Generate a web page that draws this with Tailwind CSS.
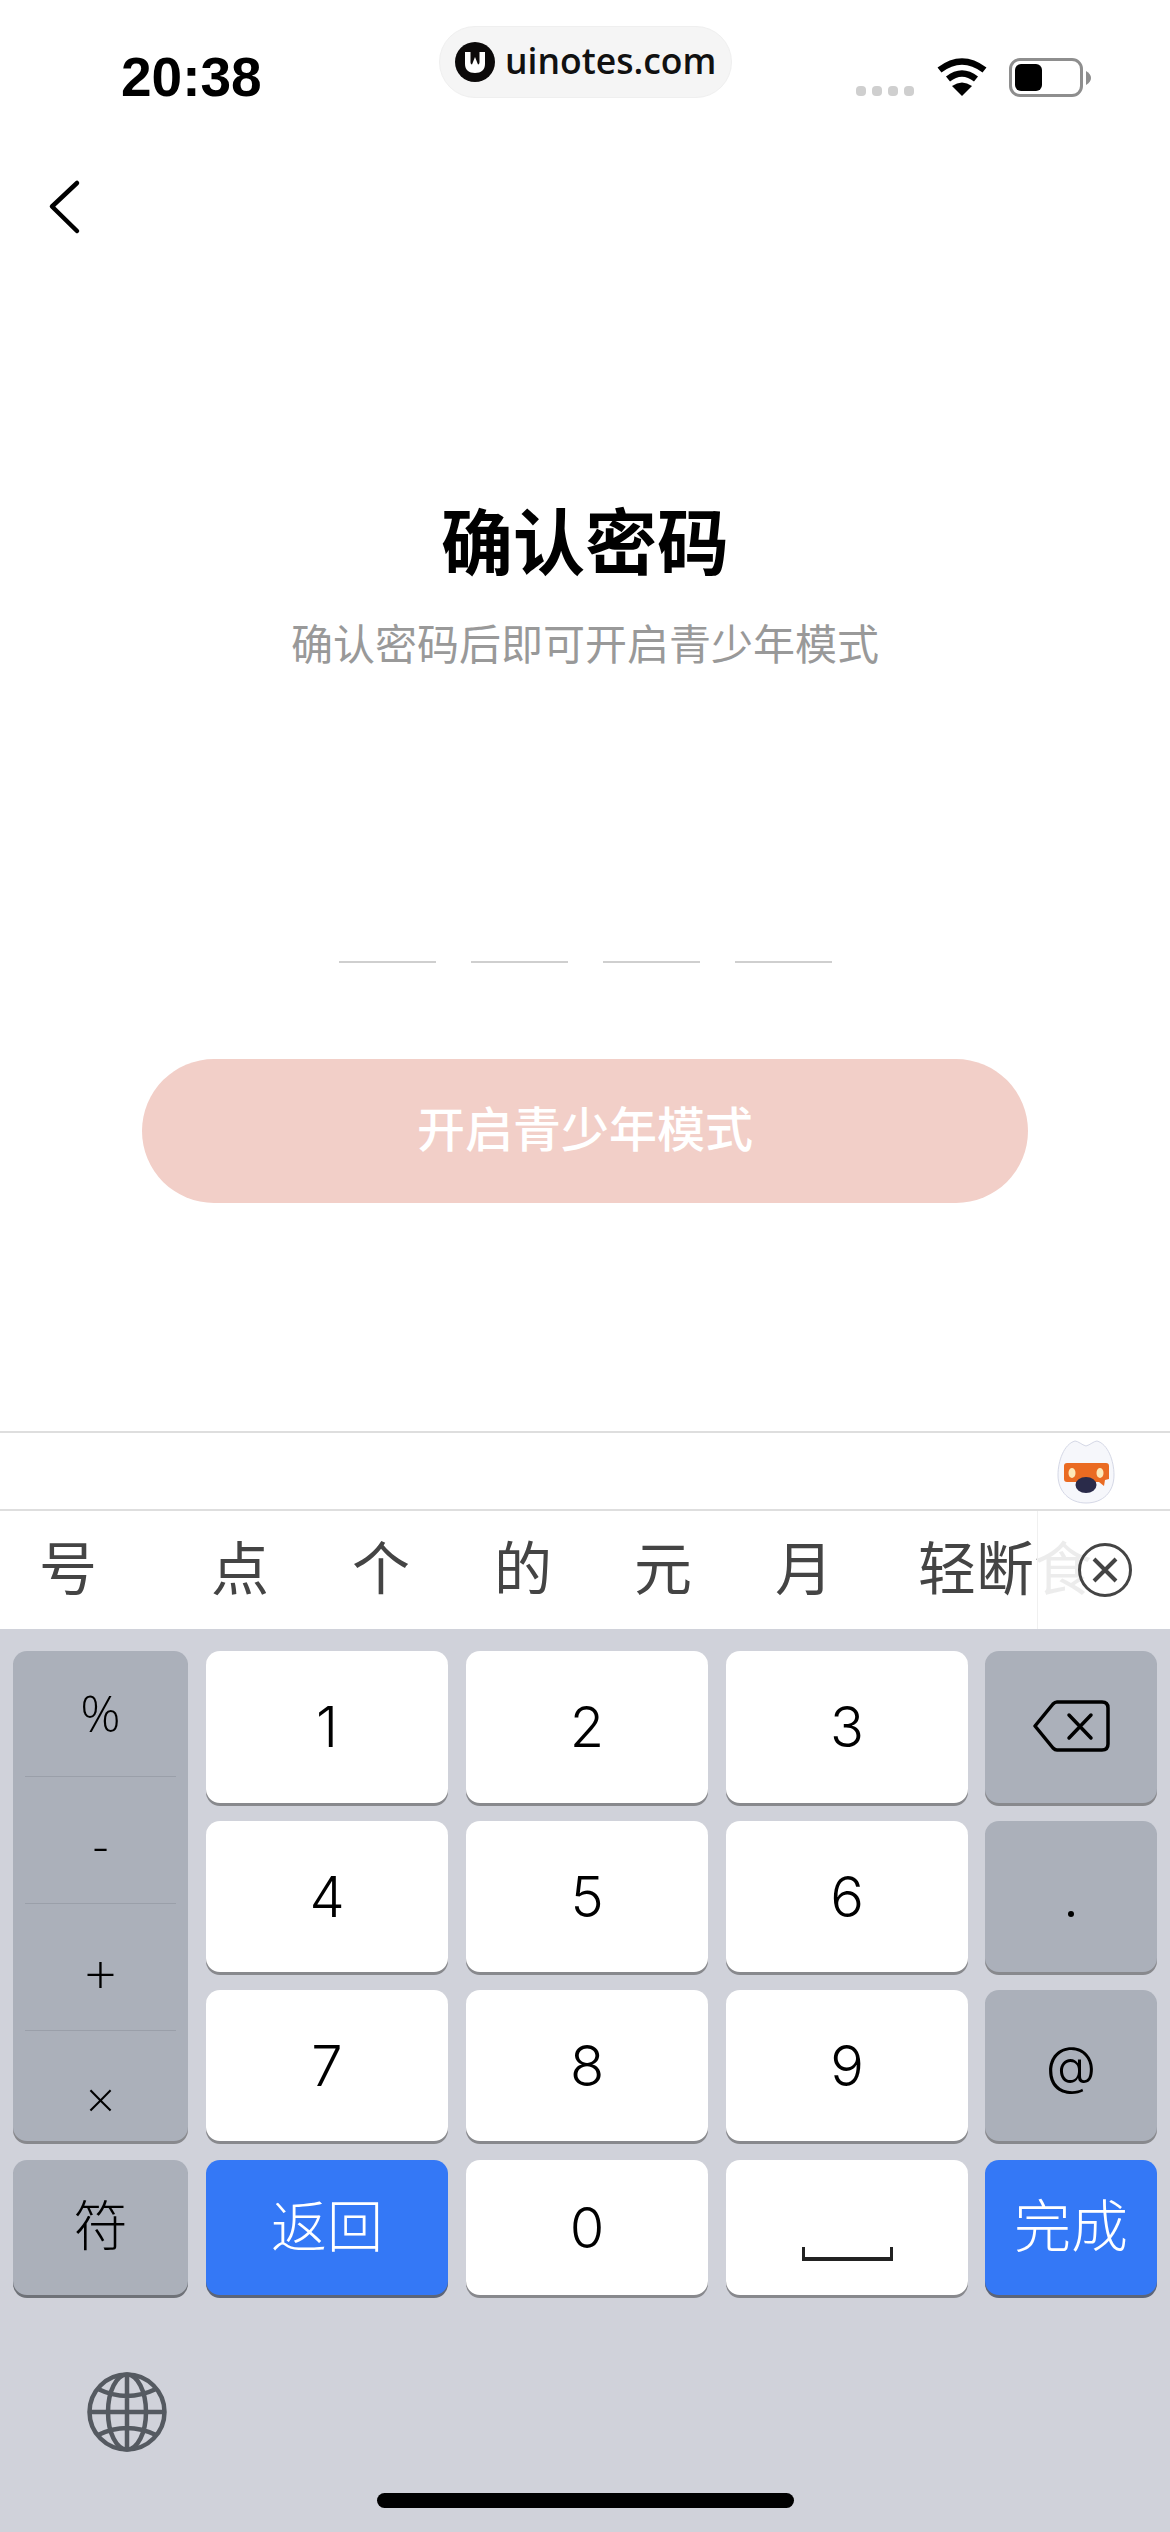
<!DOCTYPE html>
<html lang="zh-CN">
<head>
  <meta charset="UTF-8" />
  <meta name="viewport" content="width=device-width, initial-scale=1.0"/>
  <title>确认密码</title>
  <script src="https://cdn.jsdelivr.net/npm/@tailwindcss/browser@4"></script>
</head>
<body class="bg-white font-['Liberation_Sans','Noto_Sans_CJK_SC',sans-serif]">
<div class="relative w-[1170px] h-[2532px] overflow-hidden bg-white flex flex-col">

  <!-- status bar -->
  <div class="h-[160px] shrink-0 relative">
    <div class="absolute left-[121px] top-[46px] text-[55px] leading-[62px] font-bold text-black">20:38</div>
    <!-- watermark -->
    <div class="absolute left-[439px] top-[26px] w-[293px] h-[72px] rounded-[36px] bg-[#f5f5f5] border border-[#efefef] flex items-center pl-[15px] gap-[10px]">
      <svg width="40" height="40" viewBox="0 0 40 40"><circle cx="20" cy="20" r="20" fill="#0c0a0a"/><path d="M10 10h5.500v10c0 1.500.5 2.500 1.500 2.500L20 15l3 7.500c1 0 1.500-1 1.500-2.500V10H30v12c0 6-4 9-10 9s-10-3-10-9z" fill="#fff"/></svg>
      <span class="text-[35.500px] leading-none font-semibold text-[#111] -mt-[3px] font-['Open_Sans',sans-serif]">uinotes.com</span>
    </div>
    <!-- signal dots -->
    <div class="absolute left-[856px] top-[86px] flex gap-[6px]">
      <span class="w-[10px] h-[10px] rounded-[4px] bg-[#cfcfcf]"></span>
      <span class="w-[10px] h-[10px] rounded-[4px] bg-[#cfcfcf]"></span>
      <span class="w-[10px] h-[10px] rounded-[4px] bg-[#cfcfcf]"></span>
      <span class="w-[10px] h-[10px] rounded-[4px] bg-[#cfcfcf]"></span>
    </div>
    <svg class="absolute left-[937px] top-[58px]" width="50" height="38" viewBox="0 0 50 38" fill="none" stroke="#000" stroke-width="6.500">
      <path d="M2.500 12Q25 -5 47.500 12"/>
      <path d="M11 21Q25 10 39 21"/>
      <path d="M25 38L15 28Q25 21 35 28Z" fill="#000" stroke="none"/>
    </svg>
    <!-- battery -->
    <div class="absolute left-[1009px] top-[58px] w-[74px] h-[39px] rounded-[11px] border-[3px] border-[#8e8e8e] p-[3px]">
      <div class="w-[27px] h-full rounded-[6px] bg-black"></div>
    </div>
    <svg class="absolute left-[1086px] top-[71px]" width="5" height="14" viewBox="0 0 5 14"><path d="M0 0Q5 3 5 7Q5 11 0 14Z" fill="#8e8e8e"/></svg>
    <!-- back -->
    <svg class="absolute left-[46px] top-[178px]" width="36" height="58" viewBox="0 0 36 58" fill="none" stroke="#000" stroke-width="4.500" stroke-linecap="round" stroke-linejoin="round">
      <path d="M31 5L6 28.500L31 53"/>
    </svg>
  </div>

  <!-- form -->
  <div class="h-[1271px] shrink-0 flex flex-col items-center">
    <h1 class="mt-[344px] text-[72px] leading-[80px] font-bold text-black">确认密码</h1>
    <p class="mt-[37px] text-[42px] leading-[50px] text-[#999999]">确认密码后即可开启青少年模式</p>
    <div class="mt-[290px] flex gap-[35px]">
      <span class="w-[97px] h-[2px] bg-[#cfcfcf]"></span>
      <span class="w-[97px] h-[2px] bg-[#cfcfcf]"></span>
      <span class="w-[97px] h-[2px] bg-[#cfcfcf]"></span>
      <span class="w-[97px] h-[2px] bg-[#cfcfcf]"></span>
    </div>
    <button class="mt-[96px] w-[886px] h-[144px] rounded-[72px] bg-[#f2cfc8] text-white text-[48px] font-medium">开启青少年模式</button>
  </div>

  <!-- tool strip -->
  <div class="h-[80px] shrink-0 border-y-2 border-[#dedede] relative">
    <svg class="absolute left-[1056px] top-[7px]" width="61" height="66" viewBox="-2 -1 61 66">
      <path d="M28 5C24 4 20 0 17 0C6 3 0 20 0 34C0 51 12 62 28 62C45 62 56 51 56 34C56 20 50 3 39 0C36 0 32 4 28 5Z" fill="#f6f7fb" stroke="#d5d8e6" stroke-width="1"/>
      <path d="M6 25Q6 22 9 22H48Q51 22 51 25V38L47 39L46 45L41 41H9Q6 41 6 38Z" fill="#ea6b22"/>
      <ellipse cx="14" cy="32" rx="3.500" ry="5" fill="#fde9b8"/>
      <ellipse cx="42" cy="32" rx="3.500" ry="5" fill="#fde9b8"/>
      <ellipse cx="28" cy="44" rx="10.500" ry="8" fill="#2a2b4a"/>
    </svg>
  </div>

  <!-- candidate row -->
  <div class="h-[118px] shrink-0 relative overflow-hidden bg-white flex items-center pl-[39px] text-[58px] leading-none text-[#444444] whitespace-nowrap">
    <span>号</span>
    <span class="ml-[114px]">点</span>
    <span class="ml-[83px]">个</span>
    <span class="ml-[84px]">的</span>
    <span class="ml-[82px]">元</span>
    <span class="ml-[83px]">月</span>
    <span class="ml-[85px]">轻断食</span>
    <div class="absolute right-0 top-0 bottom-0 w-[133px] bg-white/90 border-l border-[#f0f0f0] flex items-center">
      <svg class="ml-[40px]" width="54" height="54" viewBox="0 0 54 54" fill="none" stroke="#444" stroke-width="3">
        <circle cx="27" cy="27" r="25.500"/>
        <path d="M16 16L38 38M38 16L16 38" stroke-width="4"/>
      </svg>
    </div>
  </div>

  <!-- keyboard -->
  <div class="flex-1 bg-[#d0d2da] relative pt-[22px] pl-[13px] pr-[13px]">
    <div class="flex gap-[18px]">
      <!-- symbols -->
      <div class="w-[175px] h-[490px] rounded-[14px] bg-[#abb0ba] shadow-[0_3px_0_#88898d] text-[50px] font-light text-black text-center px-[12px] flex flex-col font-['Open_Sans','Noto_Sans_CJK_SC',sans-serif]">
        <div class="h-[126px] flex items-center justify-center border-b border-[#9a9fa9]">%</div>
        <div class="h-[127px] flex items-center justify-center border-b border-[#9a9fa9] pt-[8px]">-</div>
        <div class="h-[127px] flex items-center justify-center border-b border-[#9a9fa9] pt-[10px] text-[56px]">+</div>
        <div class="h-[110px] flex items-center justify-center pt-[26px]">×</div>
      </div>
      <!-- digits -->
      <div class="grid grid-cols-[242px_242px_242px] gap-x-[18px] gap-y-[18px] grid-rows-[152px_151px_151px] text-[56px] font-light text-black font-['Inter',sans-serif] h-[490px]">
        <div class="rounded-[14px] bg-white shadow-[0_3px_0_#88898d] flex items-center justify-center">1</div>
        <div class="rounded-[14px] bg-white shadow-[0_3px_0_#88898d] flex items-center justify-center">2</div>
        <div class="rounded-[14px] bg-white shadow-[0_3px_0_#88898d] flex items-center justify-center">3</div>
        <div class="rounded-[14px] bg-white shadow-[0_3px_0_#88898d] flex items-center justify-center">4</div>
        <div class="rounded-[14px] bg-white shadow-[0_3px_0_#88898d] flex items-center justify-center">5</div>
        <div class="rounded-[14px] bg-white shadow-[0_3px_0_#88898d] flex items-center justify-center">6</div>
        <div class="rounded-[14px] bg-white shadow-[0_3px_0_#88898d] flex items-center justify-center">7</div>
        <div class="rounded-[14px] bg-white shadow-[0_3px_0_#88898d] flex items-center justify-center">8</div>
        <div class="rounded-[14px] bg-white shadow-[0_3px_0_#88898d] flex items-center justify-center">9</div>
      </div>
      <!-- right -->
      <div class="w-[172px] -ml-[1px] grid grid-rows-[152px_151px_151px] gap-y-[18px]">
        <div class="rounded-[14px] bg-[#abb0ba] shadow-[0_3px_0_#88898d] flex items-center justify-center">
          <svg class="-mt-[2px]" width="77" height="52" viewBox="0 0 77 52" fill="none" stroke="#000" stroke-width="3.500" stroke-linejoin="round">
            <path d="M24 2H69Q75 2 75 8V44Q75 50 69 50H24Q22 50 20 48L2 26L20 4Q22 2 24 2Z"/>
            <path d="M36 15L58 38M58 15L36 38" stroke-linecap="round"/>
          </svg>
        </div>
        <div class="rounded-[14px] bg-[#abb0ba] shadow-[0_3px_0_#88898d] flex items-center justify-center pt-[34px]">
          <span class="w-[6px] h-[6px] rounded-full bg-black"></span>
        </div>
        <div class="rounded-[14px] bg-[#abb0ba] shadow-[0_3px_0_#88898d] flex items-center justify-center text-[52px] font-light text-black font-['Inter',sans-serif]">@</div>
      </div>
    </div>
    <!-- bottom row -->
    <div class="mt-[19px] flex gap-[18px] h-[135px] font-light">
      <div class="w-[175px] rounded-[14px] bg-[#abb0ba] shadow-[0_3px_0_#6f7278] flex items-center justify-center text-[54px] text-black">符</div>
      <div class="w-[242px] rounded-[14px] bg-[#3478f6] shadow-[0_3px_0_#5c6578] flex items-center justify-center text-[56px] text-white">返回</div>
      <div class="w-[242px] rounded-[14px] bg-white shadow-[0_3px_0_#88898d] flex items-center justify-center text-[56px] text-black font-['Inter',sans-serif]">0</div>
      <div class="w-[242px] -mr-[1px] rounded-[14px] bg-white shadow-[0_3px_0_#88898d] flex justify-center items-end pb-[34px]">
        <span class="w-[91px] h-[14px] border-x-[3px] border-b-[4px] border-[#222222]"></span>
      </div>
      <div class="w-[172px] rounded-[14px] bg-[#3478f6] shadow-[0_3px_0_#5c6578] flex items-center justify-center text-[57px] text-white">完成</div>
    </div>
    <!-- globe -->
    <svg class="mt-[77px] ml-[74px]" width="80" height="80" viewBox="0 0 80 80" fill="none" stroke="#555a61" stroke-width="4.500">
      <circle cx="40" cy="40" r="37.500"/>
      <ellipse cx="40" cy="40" rx="19" ry="37.500"/>
      <path d="M40 2V78M2 40H78M11 17Q40 31 69 17M11 63Q40 49 69 63"/>
    </svg>
    <!-- home bar -->
    <div class="absolute left-[377px] top-[864px] w-[417px] h-[15px] rounded-full bg-black"></div>
  </div>
</div>
</body>
</html>
